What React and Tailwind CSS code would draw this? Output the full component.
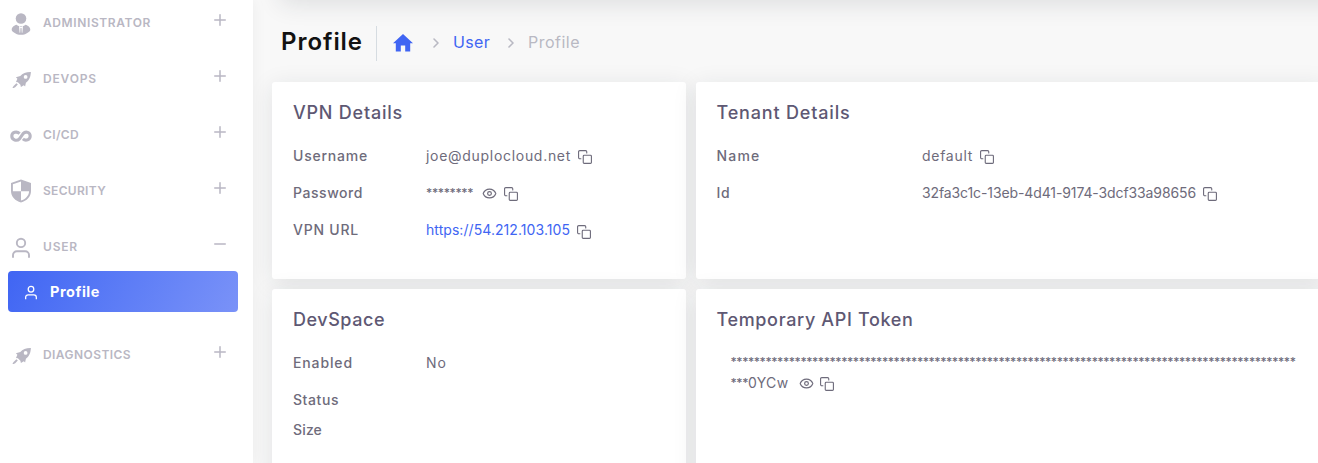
import { useLayoutEffect, useRef } from "react";
import { ChevronRight, Eye, Plus, Minus } from "lucide-react";

const stroke = { fill: "none", stroke: "currentColor", strokeLinecap: "round", strokeLinejoin: "round" };

function AdminIcon() {
  return (
    <svg viewBox="0 0 24 24" className="size-6" fill="currentColor">
      <circle cx="12" cy="7.500" r="5.300" />
      <path d="M7.600 13.800c1.200 1 2.800 1.500 4.400 1.500s3.200-.5 4.400-1.500c2.600.5 4.900 2.700 4.900 4.900 0 1.200-1 1.700-1.900 2.500-1.900 1.700-4.500 2.600-7.400 2.600s-5.500-.9-7.400-2.600c-.9-.8-1.900-1.300-1.900-2.500 0-2.200 2.300-4.400 4.900-4.900Z" />
      <path d="M10 14.900 12 16l2-1.100-.6 6.800h-.6l-.3-4.700h-1l-.3 4.700h-.6Z" fill="#fff" />
    </svg>
  );
}

function RocketIcon() {
  return (
    <svg viewBox="0 0 24 24" className="size-6" fill="currentColor">
      <path fillRule="evenodd" d="M21.900 5c-4.800-.1-8.200 1.100-10.600 4L6.900 10.200 8.400 11.700 7 15l1.900.3 2.500 2.500.5 2.100 2.900-1.600 1.300 1.300.8-3.900c3.400-2.500 4.700-5.700 5-10.700ZM16.600 8a1.900 1.900 0 1 1 0 3.800 1.900 1.900 0 0 1 0-3.800Z" />
      <path d="m7.400 16.300 1.400 1.300-2.600 2.600-1.500.9H3.700v-.9l.9-1.300Z" />
    </svg>
  );
}

function InfinityIcon() {
  return (
    <svg viewBox="0 0 24 24" className="size-6">
      <path {...stroke} strokeLinecap="butt" strokeWidth="3.100" d="M10.600 10.600C7.700 7.700 2.800 9.300 2.800 13.100c0 4.100 5 5.500 7.700 2.700l3.600-5.200c2.700-2.800 7.100-1.300 7.100 2.500 0 3.900-4.600 5.300-7.300 2.700" />
    </svg>
  );
}

function ShieldIcon() {
  return (
    <svg viewBox="0 0 24 24" className="size-6" fill="currentColor">
      <path fillRule="evenodd" d="M12 .5 2 3.900v8.200c0 5.900 4.300 9.900 10 11.500 5.700-1.600 10-5.600 10-11.500V3.900Zm0 2v9.700H3.900V5.300Zm0 9.700h8.100c-.3 4.600-3.500 7.900-8.100 9.400Z" />
    </svg>
  );
}

function UserIcon({ className }) {
  return (
    <svg viewBox="0 0 24 24" className={className}>
      <g {...stroke} strokeWidth="1.900">
        <circle cx="12" cy="7.900" r="4.200" />
        <path strokeLinecap="butt" d="M4 22.800v-2.800a3.800 3.800 0 0 1 3.800-3.800h8.400a3.800 3.800 0 0 1 3.800 3.800v2.800" />
      </g>
    </svg>
  );
}

// Spreads the letters of a label so that it takes its column's set width.
function Fit({ w, className = "", children }) {
  const ref = useRef(null);
  useLayoutEffect(() => {
    const el = ref.current;
    el.style.letterSpacing = "0px";
    const natural = el.getBoundingClientRect().width;
    el.style.letterSpacing = `${(w - natural) / children.length}px`;
  }, [w, children]);
  return <span ref={ref} className={`whitespace-nowrap ${className}`}>{children}</span>;
}

function NavItem({ icon, label, w, open }) {
  const Sign = open ? Minus : Plus;
  return (
    <div className="flex h-14 items-start pl-[9px] pr-6">
      <span className="mt-[11px] shrink-0">{icon}</span>
      <span className="ml-[10px] mt-[14px] flex-1 text-[12px] leading-[18px] font-semibold">
        <Fit w={w}>{label}</Fit>
      </span>
      <Sign className="mt-[11px] size-[18px]" strokeWidth={2} />
    </div>
  );
}

function CopyIcon({ className = "" }) {
  return (
    <svg viewBox="0 0 24 24" className={`size-[14px] shrink-0 ${className}`}>
      <g {...stroke} strokeWidth="1.900">
        <rect x="9" y="9" width="14" height="14" rx="1.600" />
        <path d="M5 15H3a2 2 0 0 1-2-2V3a2 2 0 0 1 2-2h10a2 2 0 0 1 2 2v2" />
      </g>
    </svg>
  );
}

function EyeIcon({ className = "" }) {
  return <Eye className={`size-[15px] shrink-0 ${className}`} strokeWidth={1.9} />;
}

function Card({ title, w, children, className = "" }) {
  return (
    <section className={`rounded-[3px] bg-white pt-[18px] shadow-[0_4px_24px_0_rgba(34,41,47,0.1)] ${className || "px-[21px]"}`}>
      <h2 className="text-[18px] leading-[26px] font-medium text-[#5e5873]"><Fit w={w}>{title}</Fit></h2>
      {children}
    </section>
  );
}

function Row({ label, w, labelCol, h = "h-[37px]", children }) {
  return (
    <div className={`flex items-start ${h}`}>
      <div className={`shrink-0 text-[14px] leading-[21px] font-medium ${labelCol}`}><Fit w={w}>{label}</Fit></div>
      <div className="flex items-center text-[14px] leading-[21px]">{children}</div>
    </div>
  );
}

export default function App() {
  return (
    <div className="flex h-[463px] w-[1318px] overflow-hidden bg-[#f8f8f8] font-['Inter',sans-serif] text-[#6e6b7b]">
      <aside className="z-10 w-[253px] shrink-0 bg-white text-[#b9b7c3] shadow-[0_0_15px_0_rgba(34,41,47,0.05)]">
        <NavItem icon={<AdminIcon />} label="ADMINISTRATOR" w={108} />
        <NavItem icon={<RocketIcon />} label="DEVOPS" w={54} />
        <NavItem icon={<InfinityIcon />} label="CI/CD" w={36} />
        <NavItem icon={<ShieldIcon />} label="SECURITY" w={63} />
        <NavItem icon={<UserIcon className="size-6" />} label="USER" w={35} open />
        <div className="-mt-[9px] mr-[15px] mb-5 ml-2 flex h-[41px] items-center rounded-[4px] bg-linear-118 from-[#4065f3] to-[#7a92f8] pl-[15px] text-white">
          <UserIcon className="size-4" />
          <Fit w={50} className="ml-[11px] text-[14.500px] font-bold">Profile</Fit>
        </div>
        <NavItem icon={<RocketIcon />} label="DIAGNOSTICS" w={88} />
      </aside>
      <main className="flex min-w-0 flex-1 flex-col pl-[19px]">
        <div className="-mt-10 -mr-10 ml-2 h-10 shrink-0 bg-white shadow-[0_4px_24px_0_rgba(34,41,47,0.12)]" />
        <header className="flex h-[82px] shrink-0 items-start pl-[9px]">
          <h1 className="mt-[26px] w-[95px] text-[24px] leading-[32px] font-semibold text-[#121212]"><Fit w={82}>Profile</Fit></h1>
          <nav className="mt-[26px] flex h-[35px] items-center border-l border-[#d6dce1] pb-[3px] pl-4 text-[16px] leading-6 text-[#b9b9c3]">
            <svg viewBox="0 0 20 18" className="mt-[2px] h-[18px] w-5 text-[#4065f3]" fill="currentColor"><path d="M10 0 0 9.200h2.800V17.500h5V11.500h4.400v6h5V9.200H20Z" /></svg>
            <ChevronRight className="mt-px ml-[15px] size-4" strokeWidth={2.4} />
            <Fit w={37} className="ml-[9px] text-[#4065f3]">User</Fit>
            <ChevronRight className="mt-px ml-[13px] size-4" strokeWidth={2.4} />
            <Fit w={52} className="ml-[9px]">Profile</Fit>
          </nav>
        </header>
        <div className="grid grid-cols-[414px_630px] grid-rows-[197px_200px] gap-[10px]">
          <Card title="VPN Details" w={110}>
            <div className="mt-[19px]">
              <Row label="Username" w={75} labelCol="w-[133px]"><Fit w={145}>joe@duplocloud.net</Fit><CopyIcon className="ml-[7px] mt-[2px]" /></Row>
              <Row label="Password" w={70} labelCol="w-[133px]"><Fit w={47} className="text-[12px] font-medium">********</Fit><EyeIcon className="ml-[9px] mt-[2px]" /><CopyIcon className="ml-[7px] mt-[2px]" /></Row>
              <Row label="VPN URL" w={66} labelCol="w-[133px]"><Fit w={144} className="text-[#4065f3]">https://54.212.103.105</Fit><CopyIcon className="ml-[7px] mt-[4px]" /></Row>
            </div>
          </Card>
          <Card title="Tenant Details" w={134} className="pl-[20.500px]">
            <div className="mt-[19px]">
              <Row label="Name" w={44} labelCol="w-[205.500px]"><Fit w={51}>default</Fit><CopyIcon className="ml-[7px] mt-[2px]" /></Row>
              <Row label="Id" w={14} labelCol="w-[205.500px]"><Fit w={274}>32fa3c1c-13eb-4d41-9174-3dcf33a98656</Fit><CopyIcon className="ml-[7px] mt-[2px]" /></Row>
            </div>
          </Card>
          <Card title="DevSpace" w={92}>
            <div className="mt-[19px]">
              <Row label="Enabled" w={60} labelCol="w-[133px]"><Fit w={21}>No</Fit></Row>
              <Row label="Status" w={46} labelCol="w-[133px]" h="h-[30px]" />
              <Row label="Size" w={29} labelCol="w-[133px]" />
            </div>
          </Card>
          <Card title="Temporary API Token" w={197} className="pl-[20.500px]">
            <div className="mt-[17px] pl-[14px] text-[14px] leading-[21px]">
              <div><Fit w={565} className="text-[12px] font-medium">{"*".repeat(97)}</Fit></div>
              <div className="flex items-center"><Fit w={17.5} className="text-[12px] font-medium">***</Fit><Fit w={40.5}>0YCw</Fit><EyeIcon className="ml-[10px] mt-[2px]" /><CopyIcon className="ml-[6px] mt-[2px]" /></div>
            </div>
          </Card>
        </div>
      </main>
    </div>
  );
}
